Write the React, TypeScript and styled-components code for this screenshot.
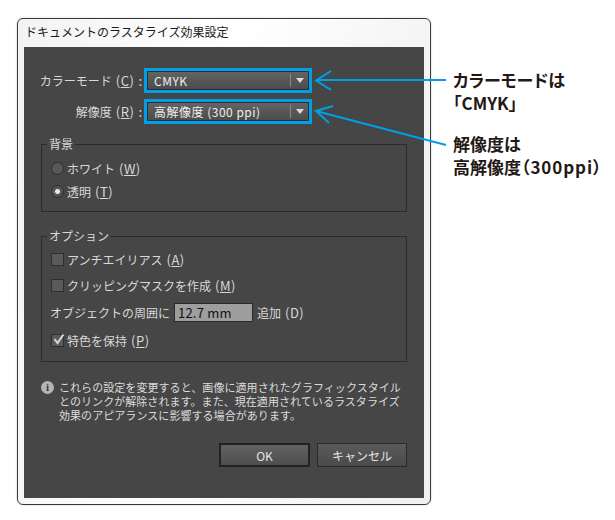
import React from 'react';
import styled, { createGlobalStyle } from 'styled-components';

const GlobalStyle = createGlobalStyle`
  html, body {
    margin: 0;
    background: #ffffff;
  }
  body {
    font-family: "Noto Sans CJK JP", "Noto Sans", sans-serif;
  }
`;

function Mnemonic({ label, letter }: { label: string; letter: string }) {
  return (
    <span>
      {label}
      <Latin>
        (<u>{letter}</u>)
      </Latin>
    </span>
  );
}

function DropDown({ value }: { value: string }) {
  return (
    <Highlight>
      <Select>
        <SelectValue>{value}</SelectValue>
        <SelectCaret />
      </Select>
    </Highlight>
  );
}

function Arrows() {
  return (
    <ArrowLayer width="615" height="520" viewBox="0 0 615 520">
      <g fill="none" stroke="#00a0e6" strokeWidth="2">
        <path d="M446 80H316" />
        <path d="M331 71L316 80.500L331 90" />
        <path d="M446 145L316 111" />
        <path d="M333 106L316 111L329 123" />
      </g>
    </ArrowLayer>
  );
}

export default function App() {
  return (
    <Page>
      <GlobalStyle />
      <Dialog>
        <TitleBar>ドキュメントのラスタライズ効果設定</TitleBar>
        <Panel>
          <FormRow>
            <RowLabel>
              <Mnemonic label="カラーモード" letter="C" />
              <Colon>:</Colon>
            </RowLabel>
            <DropDown value="CMYK" />
          </FormRow>
          <FormRow>
            <RowLabel>
              <Mnemonic label="解像度" letter="R" />
              <Colon>:</Colon>
            </RowLabel>
            <DropDown value="高解像度 (300 ppi)" />
          </FormRow>

          <BackgroundGroup>
            <GroupTitle>背景</GroupTitle>
            <OptionRow>
              <Radio />
              <Mnemonic label="ホワイト" letter="W" />
            </OptionRow>
            <OptionRow>
              <Radio $checked />
              <Mnemonic label="透明" letter="T" />
            </OptionRow>
          </BackgroundGroup>

          <OptionsGroup>
            <GroupTitle>オプション</GroupTitle>
            <OptionRow>
              <CheckBox />
              <Mnemonic label="アンチエイリアス" letter="A" />
            </OptionRow>
            <OptionRow>
              <CheckBox />
              <Mnemonic label="クリッピングマスクを作成" letter="M" />
            </OptionRow>
            <MarginRow>
              <span>オブジェクトの周囲に</span>
              <NumberInput>12.7 mm</NumberInput>
              <span>
                追加<Latin>(D)</Latin>
              </span>
            </MarginRow>
            <OptionRow>
              <CheckBox>
                <svg width="15" height="15" viewBox="0 0 15 15">
                  <path d="M3.500 7L6.500 11L12.500 2.500" fill="none" stroke="#d8d8d8" strokeWidth="2" />
                </svg>
              </CheckBox>
              <Mnemonic label="特色を保持" letter="P" />
            </OptionRow>
          </OptionsGroup>

          <Notice>
            <InfoIcon>i</InfoIcon>
            <NoticeText>
              これらの設定を変更すると、画像に適用されたグラフィックスタイル
              <br />
              とのリンクが解除されます。また、現在適用されているラスタライズ
              <br />
              効果のアピアランスに影響する場合があります。
            </NoticeText>
          </Notice>

          <Buttons>
            <Button $primary>OK</Button>
            <Button>キャンセル</Button>
          </Buttons>
        </Panel>
      </Dialog>

      <Callouts>
        <CalloutFirst>
          カラーモードは
          <br />
          「CMYK」
        </CalloutFirst>
        <Callout>
          解像度は
          <br />
          高解像度<Spaced>（300ppi）</Spaced>
        </Callout>
      </Callouts>
      <Arrows />
    </Page>
  );
}

// Styled Components
const Page = styled.div`
  position: relative;
  width: 615px;
  height: 520px;
  overflow: hidden;
  padding: 18px 0 0 17px;
  box-sizing: border-box;
  display: flex;
  align-items: flex-start;
  background: #ffffff;
`;

const Dialog = styled.div`
  width: 414px;
  height: 487px;
  box-sizing: border-box;
  flex: none;
  display: flex;
  flex-direction: column;
  padding: 0 6px 6px;
  border: 1px solid #3a3a3a;
  border-radius: 6px;
  background: linear-gradient(100deg, #f3f3f3, #ffffff 45%, #f0f0f0);
  box-shadow: 0 0 2px rgba(0, 0, 0, 0.25);
`;

const TitleBar = styled.div`
  height: 28px;
  flex: none;
  padding-left: 1px;
  font-size: 12px;
  line-height: 26px;
  color: #1a1a1a;
`;

const Panel = styled.div`
  flex: 1;
  display: flex;
  flex-direction: column;
  box-sizing: border-box;
  padding: 21px 17px 0 17px;
  background: #464646;
  color: #e0e0e0;
  font-size: 12px;
`;

const Latin = styled.span`
  margin-left: 4px;
  font-size: 13px;
  letter-spacing: 0.5px;
`;

const FormRow = styled.div`
  display: flex;
  align-items: center;
  justify-content: flex-end;
  width: 271px;
  margin-bottom: 6px;
  gap: 2px;
`;

const RowLabel = styled.div`
  white-space: nowrap;
  color: #d8d8d8;
`;

const Colon = styled.span`
  margin-left: 4px;
  font-size: 13px;
`;

const Highlight = styled.div`
  width: 168px;
  height: 25px;
  flex: none;
  box-sizing: border-box;
  border: 3px solid #00a0e6;
  background: #2a2a2a;
`;

const Select = styled.div`
  height: 100%;
  display: flex;
  align-items: center;
  background: linear-gradient(#636363, #4c4c4c);
  box-sizing: border-box;
  border: 1px solid #2c2c2c;
`;

const SelectValue = styled.div`
  flex: 1;
  padding-left: 6px;
  color: #eeeeee;
  font-size: 12px;
  letter-spacing: 0.5px;
`;

const SelectCaret = styled.div`
  width: 17px;
  height: 13px;
  border-left: 1px solid #8a8a8a;
  position: relative;

  &::after {
    content: '';
    position: absolute;
    left: 5px;
    top: 4px;
    border-left: 4px solid transparent;
    border-right: 4px solid transparent;
    border-top: 5px solid #dcdcdc;
  }
`;

const Group = styled.fieldset`
  margin: 0;
  padding: 0 0 0 9px;
  width: 366px;
  box-sizing: border-box;
  border: 1px solid #2b2b2b;
  border-radius: 0;
  display: flex;
  flex-direction: column;
  color: #d8d8d8;
`;

const BackgroundGroup = styled(Group)`
  height: 75px;
  margin-top: 7px;
  padding-top: 7px;
  gap: 3px;
`;

const OptionsGroup = styled(Group)`
  height: 133px;
  margin-top: 17px;
  padding-top: 6px;
  gap: 6px;
`;

const GroupTitle = styled.legend`
  padding: 0 2px;
  margin-left: -4px;
  font-size: 12px;
  line-height: 14px;
  color: #d8d8d8;
`;

const OptionRow = styled.div`
  display: flex;
  align-items: center;
  gap: 2px;
  height: 20px;
  white-space: pre;
`;

const MarginRow = styled.div`
  display: flex;
  align-items: center;
  gap: 4px;
  height: 23px;
  white-space: pre;
  margin-left: -1px;
`;

const NumberInput = styled.div`
  width: 79px;
  height: 19px;
  box-sizing: border-box;
  padding-left: 3px;
  border: 1px solid #2a2a2a;
  background: #9e9e9e;
  color: #111111;
  font-size: 13px;
  letter-spacing: 0.2px;
  line-height: 18px;
`;

const Radio = styled.span<{ $checked?: boolean }>`
  width: 11px;
  height: 11px;
  flex: none;
  margin-right: 1px;
  border-radius: 50%;
  border: 1px solid #2e2e2e;
  background: ${(p) => (p.$checked ? 'radial-gradient(circle, #e8e8e8 0 2px, #555555 3px)' : '#585858')};
`;

const CheckBox = styled.span`
  width: 11px;
  height: 11px;
  flex: none;
  margin-right: 1px;
  position: relative;
  border: 1px solid #2e2e2e;
  background: #5a5a5a;

  svg {
    position: absolute;
    left: -1px;
    top: -3px;
  }
`;

const Notice = styled.div`
  display: flex;
  gap: 5px;
  margin-top: 18px;
`;

const InfoIcon = styled.span`
  width: 13px;
  height: 13px;
  flex: none;
  margin-top: 1px;
  border-radius: 50%;
  background: #b4b4b4;
  color: #3c3c3c;
  font-family: "Liberation Serif", serif;
  font-weight: 700;
  font-size: 11px;
  line-height: 13px;
  text-align: center;
`;

const NoticeText = styled.div`
  font-size: 11px;
  line-height: 14px;
  letter-spacing: 0.06px;
  color: #dcdcdc;
  white-space: nowrap;
`;

const Buttons = styled.div`
  display: flex;
  justify-content: flex-end;
  gap: 7px;
  width: 366px;
  margin-top: 21px;
`;

const Button = styled.div<{ $primary?: boolean }>`
  width: ${(p) => (p.$primary ? '91px' : '90px')};
  height: 24px;
  box-sizing: border-box;
  display: flex;
  align-items: center;
  justify-content: center;
  font-size: 12px;
  color: #e4e4e4;
  background: ${(p) => (p.$primary ? 'linear-gradient(#626262, #4e4e4e)' : 'linear-gradient(#5a5a5a, #4a4a4a)')};
  border: ${(p) => (p.$primary ? '2px solid #222222' : '1px solid #2a2a2a')};
`;

const Callouts = styled.div`
  margin-left: 22px;
  padding-top: 50px;
  display: flex;
  flex-direction: column;
  color: #231815;
  font-size: 17px;
  font-weight: 700;
  line-height: 23px;
  white-space: nowrap;
  font-feature-settings: "palt";
`;

const Callout = styled.div``;

const CalloutFirst = styled.div`
  margin-bottom: 18px;
`;

const Spaced = styled.span`
  letter-spacing: 0.9px;
`;

const ArrowLayer = styled.svg`
  position: absolute;
  left: 0;
  top: 0;
  pointer-events: none;
`;
